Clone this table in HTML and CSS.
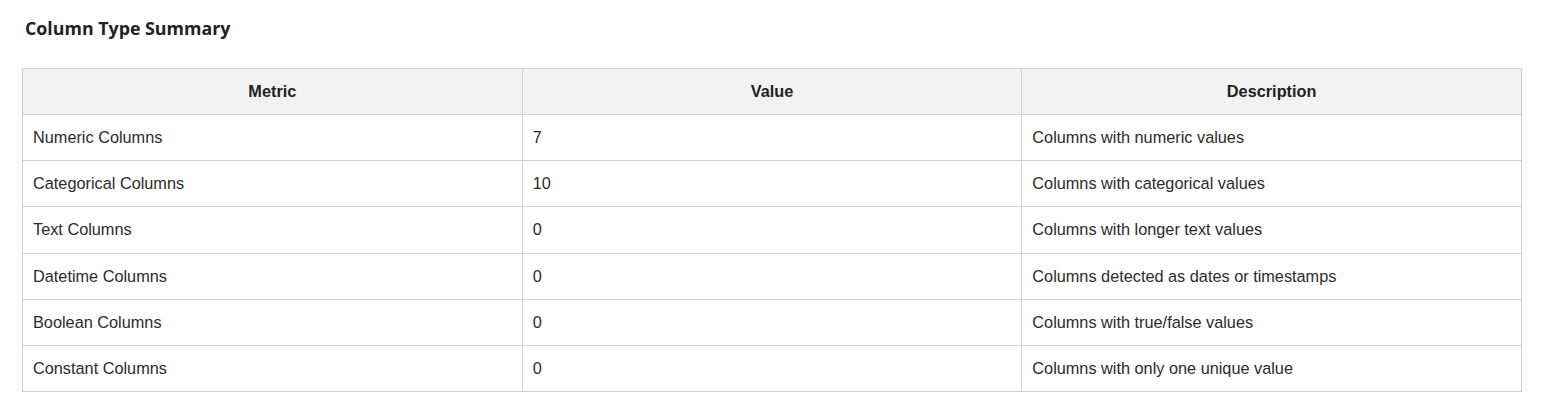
FILE: index.html
```html
<!DOCTYPE html>
<html>
<head>
<meta charset="utf-8">
<link rel="stylesheet" href="styles.css">
</head>
<body>
<section class="summary">
  <h3 class="summary-title">Column Type Summary</h3>
  <table class="summary-table">
    <thead>
      <tr><th>Metric</th><th>Value</th><th>Description</th></tr>
    </thead>
    <tbody>
      <tr><td>Numeric Columns</td><td>7</td><td>Columns with numeric values</td></tr>
      <tr><td>Categorical Columns</td><td>10</td><td>Columns with categorical values</td></tr>
      <tr><td>Text Columns</td><td>0</td><td>Columns with longer text values</td></tr>
      <tr><td>Datetime Columns</td><td>0</td><td>Columns detected as dates or timestamps</td></tr>
      <tr><td>Boolean Columns</td><td>0</td><td>Columns with true/false values</td></tr>
      <tr><td>Constant Columns</td><td>0</td><td>Columns with only one unique value</td></tr>
    </tbody>
  </table>
</section>
</body>
</html>
```
FILE: styles.css
```css
html, body {
  margin: 0;
  padding: 0;
  background: #ffffff;
}
.summary {
  padding: 18px 28px 0 22px;
}
.summary-title {
  margin: 0 0 30px 3px;
  font-family: "Open Sans", "DejaVu Sans", sans-serif;
  font-weight: 700;
  font-size: 17.8px;
  line-height: 20px;
  color: #222222;
}
.summary-table {
  width: 1500px;
  border-collapse: collapse;
  table-layout: fixed;
  font-family: "Liberation Sans", Arial, sans-serif;
  font-size: 16.3px;
  color: #2b2b2b;
}
.summary-table th,
.summary-table td {
  border: 1px solid #d0d0d0;
  height: 46.15px;
  padding: 0 10px;
  box-sizing: border-box;
}
.summary-table th {
  background: #f2f2f2;
  font-weight: 700;
  text-align: center;
  color: #222222;
}
.summary-table td {
  text-align: left;
}
```
